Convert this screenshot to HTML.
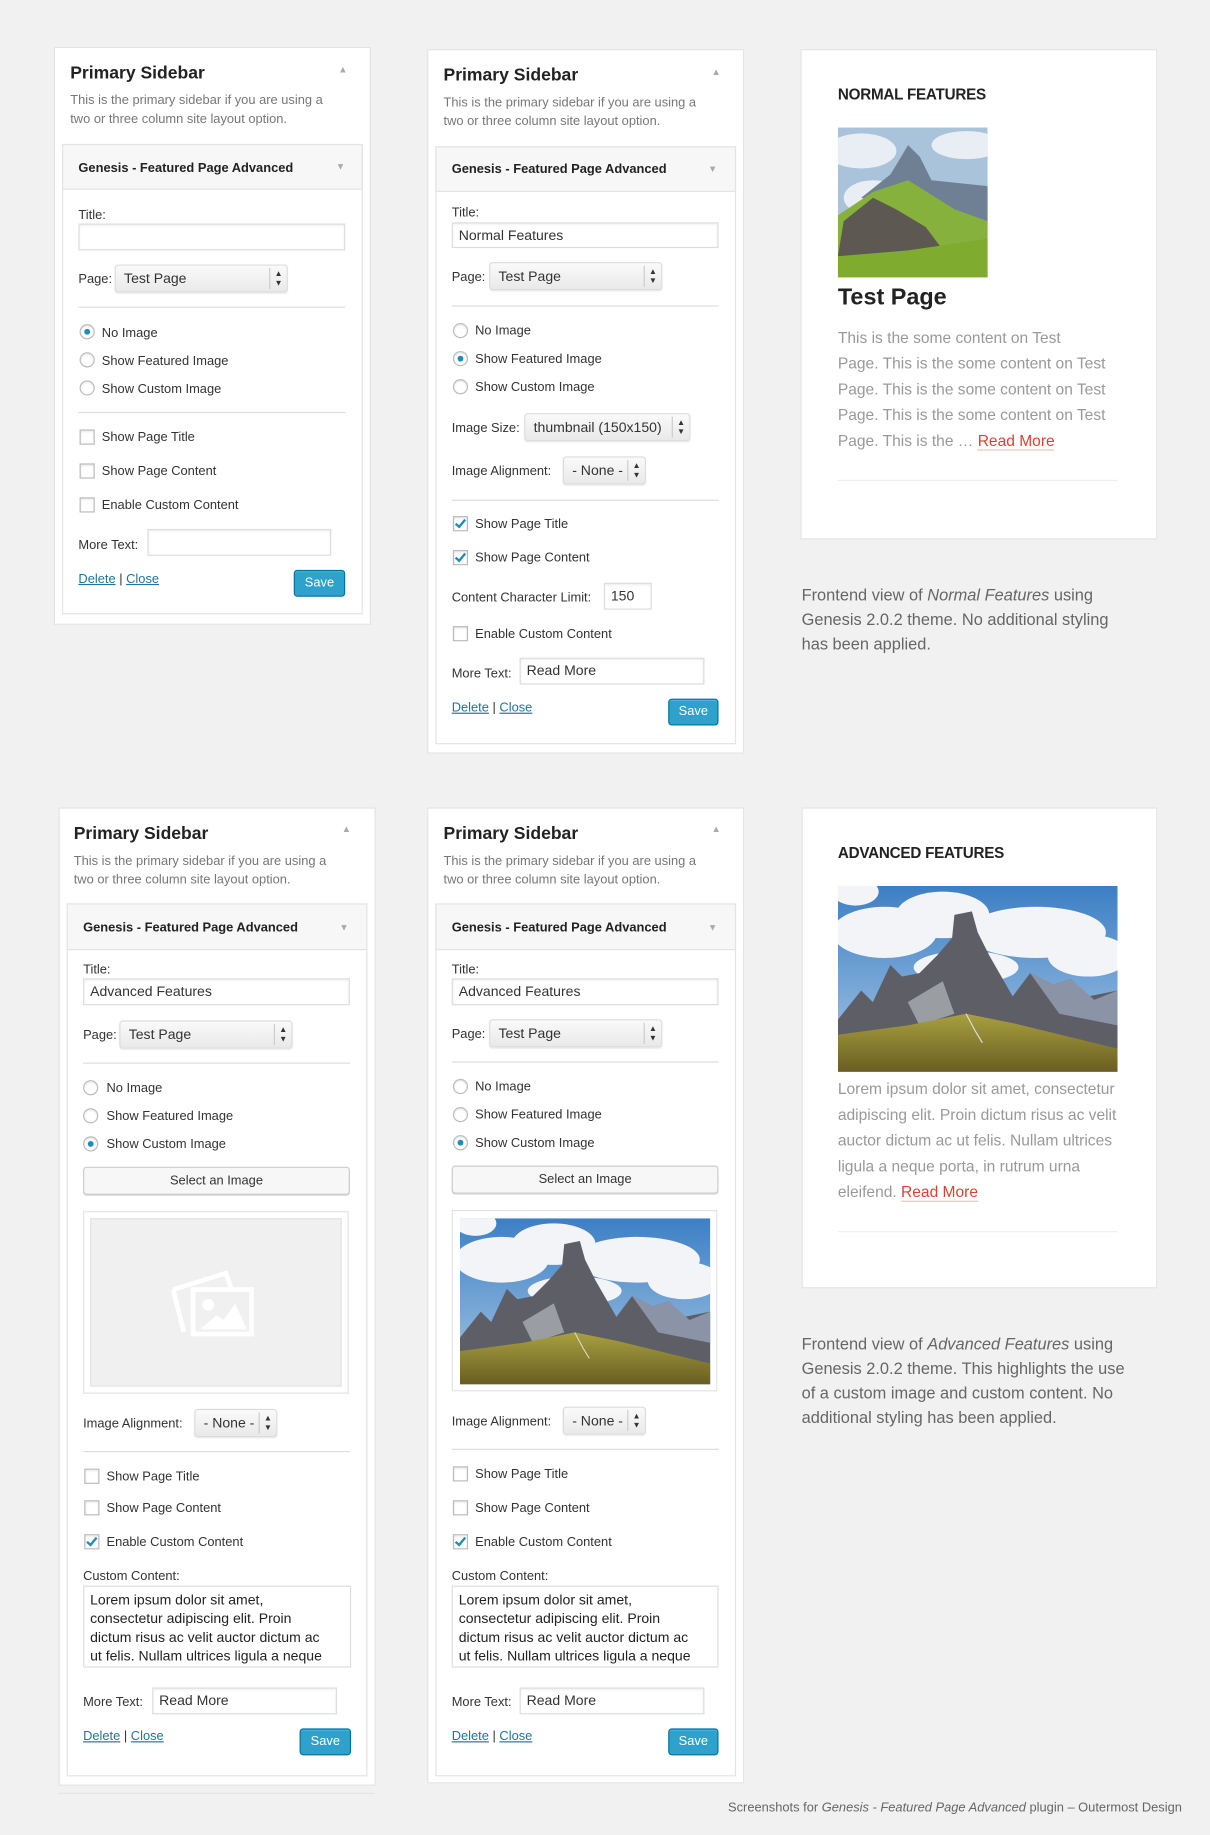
<!DOCTYPE html>
<html><head><meta charset="utf-8"><style>
html,body{margin:0;padding:0;background:#f1f1f1;width:1210px;height:1835px;overflow:hidden}
#w{position:absolute;left:0;top:0;width:1034px;height:1568px;transform:scale(1.170213);transform-origin:0 0;font-family:"Liberation Sans",sans-serif}
#w div,#w span.t{position:absolute}
.p{background:#fff;border:1px solid #e3e3e3}
.wd{background:#fff;border:1px solid #e3e3e3}
.hd{background:#f7f7f7;border:1px solid #e3e3e3}
.t{font-size:11px;line-height:14px;color:#333;white-space:nowrap;margin-top:1px}
.h{font-size:15px;font-weight:bold;color:#222;line-height:18px;white-space:nowrap;margin-top:2px}
.d{font-size:11px;line-height:16px;color:#777;white-space:nowrap;margin-top:1px}
.b{font-weight:bold;color:#222}
.in{background:#fff;border:1px solid #ddd;box-shadow:inset 0 1px 2px rgba(0,0,0,.07);font-size:12px;line-height:20px;color:#333;padding-left:5px;box-sizing:border-box;white-space:nowrap}
.sel{border:1px solid #dcdcdc;border-radius:3px;background:linear-gradient(#fafafa,#e9e9e9);box-shadow:0 1px 1px rgba(0,0,0,.08);font-size:12px;color:#333;line-height:22px;box-sizing:border-box;padding-left:7px;white-space:nowrap}
.sel i{position:absolute;right:0;top:2px;bottom:2px;width:14px;border-left:1px solid #ccc;font-style:normal;font-size:7px;line-height:8px;text-align:center;padding-top:2px;color:#333}
.hr{height:1px;background:#ddd}
.r{width:11px;height:11px;border:1px solid #bbb;border-radius:50%;background:#fff;box-shadow:inset 0 1px 2px rgba(0,0,0,.1)}
.r.on:after{content:"";position:absolute;left:3px;top:3px;width:5px;height:5px;border-radius:50%;background:#1e8cbe}
.c{width:11px;height:11px;border:1px solid #bbb;background:#fff;box-shadow:inset 0 1px 2px rgba(0,0,0,.1)}
.c.on:after{content:"";position:absolute;left:3px;top:0px;width:3px;height:7px;border:solid #1e8cbe;border-width:0 2px 2px 0;transform:rotate(40deg)}
.a{color:#21759b;text-decoration:underline}
.sv{background:#2ea2cc;border:1px solid #0074a2;border-radius:3px;color:#fff;font-size:11px;text-align:center;line-height:21px;box-sizing:border-box;box-shadow:inset 0 1px 0 rgba(120,200,230,.5)}
.btn{border:1px solid #ccc;border-radius:3px;background:#f7f7f7;font-size:11px;text-align:center;line-height:22px;color:#333;box-sizing:border-box;box-shadow:0 1px 0 #ddd}
.ar{font-size:8px;color:#aaa}
.card{background:#fff;border:1px solid #e3e3e3}
.ft{font-size:13px;font-weight:bold;color:#222;letter-spacing:-.2px}
.bt{font-size:13.3px;color:#999;line-height:22px;white-space:nowrap}
.rm{color:#d9432f;border-bottom:1px solid #e8c6c0}
.cap{font-size:14px;color:#666;line-height:21px;white-space:nowrap}
.ta{border:1px solid #ddd;background:#fff;font-size:12px;line-height:16px;color:#222;padding:3px 5px;box-sizing:border-box;white-space:nowrap;overflow:hidden}
</style></head><body>
<svg width="0" height="0" style="position:absolute">
<defs>
<linearGradient id="sky" x1="0" y1="0" x2="0" y2="1"><stop offset="0" stop-color="#3d7fc4"/><stop offset="1" stop-color="#a8c8e6"/></linearGradient>
<linearGradient id="gr" x1="0" y1="0" x2="0" y2="1"><stop offset="0" stop-color="#a8a040"/><stop offset="1" stop-color="#6a5d22"/></linearGradient>
<symbol id="m2" viewBox="0 0 240 160" preserveAspectRatio="none">
<rect width="240" height="160" fill="url(#sky)"/>
<g fill="#f2f4f7"><ellipse cx="40" cy="40" rx="45" ry="22"/><ellipse cx="90" cy="25" rx="40" ry="20"/><ellipse cx="170" cy="40" rx="60" ry="22"/><ellipse cx="215" cy="60" rx="35" ry="18"/><ellipse cx="110" cy="70" rx="45" ry="14"/><ellipse cx="15" cy="5" rx="20" ry="12"/></g>
<path d="M0 115 L20 90 L30 100 L45 68 L55 78 L70 75 L85 60 L98 45 L100 25 L115 22 L120 40 L130 60 L150 95 L165 75 L185 85 L200 80 L215 95 L240 90 L240 160 L0 160Z" fill="#5e5f66"/>
<path d="M165 75 L185 85 L200 80 L220 98 L240 90 L240 120 L190 110Z" fill="#8b93a6"/>
<path d="M60 100 L90 82 L100 110 L70 120Z" fill="#9a9ea2"/>
<path d="M0 128 L60 120 L110 110 L150 118 L240 140 L240 160 L0 160Z" fill="url(#gr)"/>
<path d="M110 110 L118 125 L124 135" stroke="#ddd" stroke-width="1" fill="none"/>
</symbol>
<symbol id="m1" viewBox="0 0 128 128" preserveAspectRatio="none">
<rect width="128" height="128" fill="#a9c3da"/>
<g fill="#e8eef3"><ellipse cx="20" cy="20" rx="30" ry="15"/><ellipse cx="110" cy="15" rx="30" ry="12"/><ellipse cx="30" cy="60" rx="25" ry="15"/></g>
<path d="M20 60 L45 40 L60 15 L70 25 L80 45 L128 50 L128 85 L60 70Z" fill="#6f8094"/>
<path d="M0 128 L0 75 L30 55 L60 45 L100 70 L128 80 L128 128Z" fill="#86b13c"/>
<path d="M0 110 L5 80 L30 60 L50 70 L75 85 L90 105 L60 110Z" fill="#5d5952"/>
<path d="M0 110 L60 105 L128 95 L128 128 L0 128Z" fill="#7fab2e"/>
</symbol>
</defs></svg>
<div id="w">

<!-- Panel 1 -->
<div class="p" style="left:46px;top:40px;width:269px;height:492px"></div>
<div class="h" style="left:60px;top:52px">Primary Sidebar</div>
<div class="ar" style="left:289px;top:55px">▲</div>
<div class="d" style="left:60px;top:77px">This is the primary sidebar if you are using a</div>
<div class="d" style="left:60px;top:93px">two or three column site layout option.</div>
<div class="wd" style="left:53px;top:123px;width:255px;height:400px"></div>
<div class="hd" style="left:53px;top:123px;width:255px;height:37px"></div>
<div class="t b" style="left:67px;top:136px">Genesis - Featured Page Advanced</div>
<div class="ar" style="left:287px;top:138px">▼</div>
<div class="t" style="left:67px;top:176px">Title:</div>
<div class="in" style="left:67px;top:191px;width:228px;height:23px"></div>
<div class="t" style="left:67px;top:231px">Page:</div>
<div class="sel" style="left:98px;top:226px;width:148px;height:24px">Test Page<i>▲<br>▼</i></div>
<div class="hr" style="left:67px;top:262px;width:228px"></div>
<div class="r on" style="left:68px;top:277px"></div><div class="t" style="left:87px;top:277px">No Image</div>
<div class="r" style="left:68px;top:301px"></div><div class="t" style="left:87px;top:301px">Show Featured Image</div>
<div class="r" style="left:68px;top:325px"></div><div class="t" style="left:87px;top:325px">Show Custom Image</div>
<div class="hr" style="left:67px;top:352px;width:228px"></div>
<div class="c" style="left:68px;top:367px"></div><div class="t" style="left:87px;top:366px">Show Page Title</div>
<div class="c" style="left:68px;top:396px"></div><div class="t" style="left:87px;top:395px">Show Page Content</div>
<div class="c" style="left:68px;top:425px"></div><div class="t" style="left:87px;top:424px">Enable Custom Content</div>
<div class="t" style="left:67px;top:458px">More Text:</div>
<div class="in" style="left:126px;top:452px;width:157px;height:23px"></div>
<div class="t" style="left:67px;top:487px"><span class="a">Delete</span> | <span class="a">Close</span></div>
<div class="sv" style="left:251px;top:487px;width:44px;height:23px">Save</div>

<!-- Panel 2 -->
<div class="p" style="left:365px;top:42px;width:269px;height:600px"></div>
<div class="h" style="left:379px;top:54px">Primary Sidebar</div>
<div class="ar" style="left:608px;top:57px">▲</div>
<div class="d" style="left:379px;top:79px">This is the primary sidebar if you are using a</div>
<div class="d" style="left:379px;top:95px">two or three column site layout option.</div>
<div class="wd" style="left:372px;top:125px;width:255px;height:509px"></div>
<div class="hd" style="left:372px;top:125px;width:255px;height:37px"></div>
<div class="t b" style="left:386px;top:137px">Genesis - Featured Page Advanced</div>
<div class="ar" style="left:605px;top:140px">▼</div>
<div class="t" style="left:386px;top:174px">Title:</div>
<div class="in" style="left:386px;top:190px;width:228px;height:22px">Normal Features</div>
<div class="t" style="left:386px;top:229px">Page:</div>
<div class="sel" style="left:418px;top:224px;width:148px;height:24px">Test Page<i>▲<br>▼</i></div>
<div class="hr" style="left:386px;top:261px;width:228px"></div>
<div class="r" style="left:387px;top:276px"></div><div class="t" style="left:406px;top:275px">No Image</div>
<div class="r on" style="left:387px;top:300px"></div><div class="t" style="left:406px;top:299px">Show Featured Image</div>
<div class="r" style="left:387px;top:324px"></div><div class="t" style="left:406px;top:323px">Show Custom Image</div>
<div class="t" style="left:386px;top:358px">Image Size:</div>
<div class="sel" style="left:448px;top:353px;width:142px;height:24px">thumbnail (150x150)<i>▲<br>▼</i></div>
<div class="t" style="left:386px;top:395px">Image Alignment:</div>
<div class="sel" style="left:481px;top:390px;width:71px;height:24px">- None -<i>▲<br>▼</i></div>
<div class="hr" style="left:386px;top:427px;width:228px"></div>
<div class="c on" style="left:387px;top:441px"></div><div class="t" style="left:406px;top:440px">Show Page Title</div>
<div class="c on" style="left:387px;top:470px"></div><div class="t" style="left:406px;top:469px">Show Page Content</div>
<div class="t" style="left:386px;top:503px">Content Character Limit:</div>
<div class="in" style="left:516px;top:498px;width:41px;height:23px">150</div>
<div class="c" style="left:387px;top:535px"></div><div class="t" style="left:406px;top:534px">Enable Custom Content</div>
<div class="t" style="left:386px;top:568px">More Text:</div>
<div class="in" style="left:444px;top:562px;width:158px;height:23px">Read More</div>
<div class="t" style="left:386px;top:597px"><span class="a">Delete</span> | <span class="a">Close</span></div>
<div class="sv" style="left:571px;top:597px;width:43px;height:23px">Save</div>

<!-- Card 1 -->
<div class="card" style="left:684px;top:42px;width:303px;height:417px"></div>
<div class="t ft" style="left:716px;top:73px">NORMAL FEATURES</div>
<svg style="position:absolute;left:716px;top:109px" width="128" height="128"><use href="#m1"/></svg>
<div class="t" style="left:716px;top:240px;font-size:20px;line-height:26px;font-weight:bold;color:#222">Test Page</div>
<div class="bt" style="position:absolute;left:716px;top:278px">This is the some content on Test<br>Page. This is the some content on Test<br>Page. This is the some content on Test<br>Page. This is the some content on Test<br>Page. This is the … <span class="rm">Read More</span></div>
<div class="hr" style="left:716px;top:410px;width:239px;background:#eee"></div>
<div class="cap" style="position:absolute;left:685px;top:498px">Frontend view of <i>Normal Features</i> using<br>Genesis 2.0.2 theme. No additional styling<br>has been applied.</div>

<!-- Panel 3 -->
<div class="p" style="left:50px;top:690px;width:269px;height:834px"></div>
<div class="hr" style="left:50px;top:1532px;width:270px;background:#e3e3e3"></div>
<div class="h" style="left:63px;top:702px">Primary Sidebar</div>
<div class="ar" style="left:292px;top:704px">▲</div>
<div class="d" style="left:63px;top:727px">This is the primary sidebar if you are using a</div>
<div class="d" style="left:63px;top:743px">two or three column site layout option.</div>
<div class="wd" style="left:57px;top:772px;width:255px;height:744px"></div>
<div class="hd" style="left:57px;top:772px;width:255px;height:38px"></div>
<div class="t b" style="left:71px;top:785px">Genesis - Featured Page Advanced</div>
<div class="ar" style="left:290px;top:788px">▼</div>
<div class="t" style="left:71px;top:821px">Title:</div>
<div class="in" style="left:71px;top:836px;width:228px;height:23px">Advanced Features</div>
<div class="t" style="left:71px;top:877px">Page:</div>
<div class="sel" style="left:102px;top:872px;width:148px;height:24px">Test Page<i>▲<br>▼</i></div>
<div class="hr" style="left:71px;top:908px;width:228px"></div>
<div class="r" style="left:71px;top:923px"></div><div class="t" style="left:91px;top:922px">No Image</div>
<div class="r" style="left:71px;top:947px"></div><div class="t" style="left:91px;top:946px">Show Featured Image</div>
<div class="r on" style="left:71px;top:971px"></div><div class="t" style="left:91px;top:970px">Show Custom Image</div>
<div class="btn" style="left:71px;top:997px;width:228px;height:24px">Select an Image</div>
<div style="left:71px;top:1035px;width:227px;height:156px;border:1px solid #e3e3e3;box-sizing:border-box;background:#fff"></div>
<div style="left:77px;top:1041px;width:215px;height:144px;background:#f0f0f0;border:1px solid #e3e3e3;box-sizing:border-box"></div>
<svg style="position:absolute;left:143px;top:1080px" width="78" height="65" viewBox="0 0 78 65"><g fill="none" stroke="#fff" stroke-width="4"><path d="M5 22 L50 8 L55 22"/><path d="M5 22 L14 58"/><rect x="22" y="22" width="50" height="38"/></g><circle cx="35" cy="35" r="5" fill="#fff"/><path d="M28 56 L42 44 L48 48 L58 34 L68 56Z" fill="#fff"/></svg>
<div class="t" style="left:71px;top:1209px">Image Alignment:</div>
<div class="sel" style="left:166px;top:1204px;width:71px;height:24px">- None -<i>▲<br>▼</i></div>
<div class="hr" style="left:71px;top:1240px;width:228px"></div>
<div class="c" style="left:72px;top:1255px"></div><div class="t" style="left:91px;top:1254px">Show Page Title</div>
<div class="c" style="left:72px;top:1282px"></div><div class="t" style="left:91px;top:1281px">Show Page Content</div>
<div class="c on" style="left:72px;top:1311px"></div><div class="t" style="left:91px;top:1310px">Enable Custom Content</div>
<div class="t" style="left:71px;top:1339px">Custom Content:</div>
<div class="ta" style="left:71px;top:1355px;width:229px;height:70px">Lorem ipsum dolor sit amet,<br>consectetur adipiscing elit. Proin<br>dictum risus ac velit auctor dictum ac<br>ut felis. Nullam ultrices ligula a neque</div>
<div class="t" style="left:71px;top:1447px">More Text:</div>
<div class="in" style="left:130px;top:1442px;width:158px;height:23px">Read More</div>
<div class="t" style="left:71px;top:1476px"><span class="a">Delete</span> | <span class="a">Close</span></div>
<div class="sv" style="left:256px;top:1477px;width:44px;height:23px">Save</div>

<!-- Panel 4 -->
<div class="p" style="left:365px;top:690px;width:269px;height:832px"></div>
<div class="h" style="left:379px;top:702px">Primary Sidebar</div>
<div class="ar" style="left:608px;top:704px">▲</div>
<div class="d" style="left:379px;top:727px">This is the primary sidebar if you are using a</div>
<div class="d" style="left:379px;top:743px">two or three column site layout option.</div>
<div class="wd" style="left:372px;top:772px;width:255px;height:744px"></div>
<div class="hd" style="left:372px;top:772px;width:255px;height:38px"></div>
<div class="t b" style="left:386px;top:785px">Genesis - Featured Page Advanced</div>
<div class="ar" style="left:605px;top:788px">▼</div>
<div class="t" style="left:386px;top:821px">Title:</div>
<div class="in" style="left:386px;top:836px;width:228px;height:23px">Advanced Features</div>
<div class="t" style="left:386px;top:876px">Page:</div>
<div class="sel" style="left:418px;top:871px;width:148px;height:24px">Test Page<i>▲<br>▼</i></div>
<div class="hr" style="left:386px;top:907px;width:228px"></div>
<div class="r" style="left:387px;top:922px"></div><div class="t" style="left:406px;top:921px">No Image</div>
<div class="r" style="left:387px;top:946px"></div><div class="t" style="left:406px;top:945px">Show Featured Image</div>
<div class="r on" style="left:387px;top:970px"></div><div class="t" style="left:406px;top:969px">Show Custom Image</div>
<div class="btn" style="left:386px;top:996px;width:228px;height:24px">Select an Image</div>
<div style="left:386px;top:1034px;width:227px;height:155px;border:1px solid #e3e3e3;box-sizing:border-box;background:#fff"></div>
<svg style="position:absolute;left:393px;top:1041px" width="214" height="142"><use href="#m2"/></svg>
<div class="t" style="left:386px;top:1207px">Image Alignment:</div>
<div class="sel" style="left:481px;top:1202px;width:71px;height:24px">- None -<i>▲<br>▼</i></div>
<div class="hr" style="left:386px;top:1238px;width:228px"></div>
<div class="c" style="left:387px;top:1253px"></div><div class="t" style="left:406px;top:1252px">Show Page Title</div>
<div class="c" style="left:387px;top:1282px"></div><div class="t" style="left:406px;top:1281px">Show Page Content</div>
<div class="c on" style="left:387px;top:1311px"></div><div class="t" style="left:406px;top:1310px">Enable Custom Content</div>
<div class="t" style="left:386px;top:1339px">Custom Content:</div>
<div class="ta" style="left:386px;top:1355px;width:228px;height:70px">Lorem ipsum dolor sit amet,<br>consectetur adipiscing elit. Proin<br>dictum risus ac velit auctor dictum ac<br>ut felis. Nullam ultrices ligula a neque</div>
<div class="t" style="left:386px;top:1447px">More Text:</div>
<div class="in" style="left:444px;top:1442px;width:158px;height:23px">Read More</div>
<div class="t" style="left:386px;top:1476px"><span class="a">Delete</span> | <span class="a">Close</span></div>
<div class="sv" style="left:571px;top:1477px;width:43px;height:23px">Save</div>

<!-- Card 2 -->
<div class="card" style="left:685px;top:690px;width:302px;height:409px"></div>
<div class="t ft" style="left:716px;top:721px">ADVANCED FEATURES</div>
<svg style="position:absolute;left:716px;top:757px" width="239" height="159"><use href="#m2"/></svg>
<div class="bt" style="position:absolute;left:716px;top:920px">Lorem ipsum dolor sit amet, consectetur<br>adipiscing elit. Proin dictum risus ac velit<br>auctor dictum ac ut felis. Nullam ultrices<br>ligula a neque porta, in rutrum urna<br>eleifend. <span class="rm">Read More</span></div>
<div class="hr" style="left:716px;top:1052px;width:239px;background:#eee"></div>
<div class="cap" style="position:absolute;left:685px;top:1138px">Frontend view of <i>Advanced Features</i> using<br>Genesis 2.0.2 theme. This highlights the use<br>of a custom image and custom content. No<br>additional styling has been applied.</div>

<div class="t" style="right:24px;top:1537px;color:#666;font-size:11px">Screenshots for <i>Genesis - Featured Page Advanced</i> plugin – Outermost Design</div>
</div>
</body></html>
